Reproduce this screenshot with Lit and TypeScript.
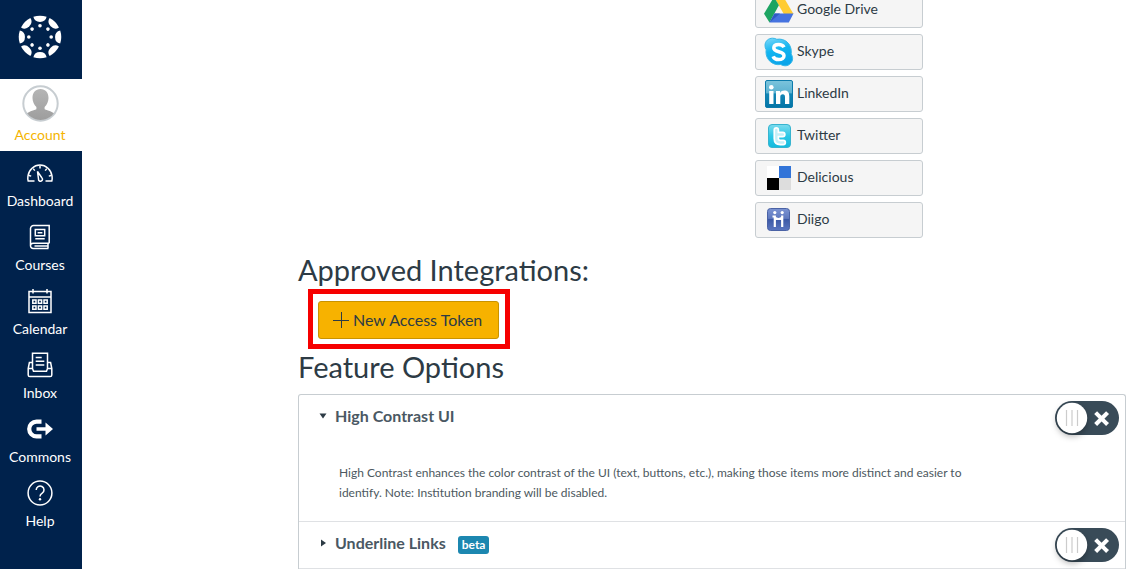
import { LitElement, html, css, svg, nothing } from "lit";
import type { SVGTemplateResult } from "lit";
import { customElement, property, state } from "lit/decorators.js";

const NAV_ICONS: Record<string, SVGTemplateResult> = {
  Dashboard: svg`
    <path d="M8.500 22H2.200C1.800 20.500 1.700 19 1.900 17.500 2.700 10.800 8 6 14 6s11.300 4.800 12.100 11.500c.2 1.500.1 3-.3 4.500H19.500"/>
    <path d="M14 6.500V9.500M7.200 9.600l1.600 2M20.800 9.600l-1.600 2M3 16.500l2.200.6M25 16.500l-2.200.6"/>
    <path d="M11.500 12.500l1 7.500a2 2 0 1 0 3.300-1.300z"/>`,
  Courses: svg`
    <path d="M23.200 20.200V2.600H7.500a3 3 0 0 0-3 3V22.800a2.600 2.600 0 0 0 2.600 2.600H22.500M23.200 20.200H7.100a2.600 2.600 0 0 0-2.600 2.600M22 20.500v4.700M8.500 22.900H22"/>
    <path d="M9.300 6.600h9.400v6.200H9.300zM9.300 15.800h9.400M11.600 9.700h4.800"/>`,
  Calendar: svg`
    <path d="M3 4.500h22v21H3zM3 10h22M7 2v4.500M21 2v4.500"/>
    <path d="M6.800 13.100h3.200v3.200H6.800zM12.400 13.100h3.200v3.200h-3.200zM18 13.100h3.200v3.200H18zM6.800 19.100h3.200v3.200H6.800zM12.400 19.100h3.200v3.200h-3.200zM18 19.100h3.200v3.200H18z"/>`,
  Inbox: svg`
    <path d="M6.500 17.500V2.300h15v15.200M6.500 11.500H3.400l-1.200 6v6.400a1.700 1.700 0 0 0 1.700 1.700h20.200a1.700 1.700 0 0 0 1.700-1.700v-6.400l-1.200-6h-3.100M2.200 17.500h4.300l1 2.700h13l1-2.700h4.300"/>
    <path d="M9.700 6.500h6M9.700 10.200h8.600M9.700 13.900h8.600"/>`,
  Commons: svg`
    <path d="M15.500 6.700H10.500a7.300 7.300 0 0 0 0 14.600H15.500" stroke-width="4.200"/>
    <path d="M10.500 12.200h9V7.500L27 14l-7.500 6.500v-4.700h-9z" fill="currentColor" stroke="none"/>`,
  Help: svg`
    <circle cx="14" cy="14" r="11.900"/>
    <path d="M10.200 11a3.900 3.900 0 1 1 6 3.200c-1.500 1-2.200 1.500-2.200 3.300" stroke-width="1.500"/>
    <circle cx="14" cy="20.300" r="1.200" fill="currentColor" stroke="none"/>`,
};

const SERVICES: { name: string; icon: SVGTemplateResult }[] = [
  {
    name: "Google Drive",
    icon: svg`
      <path d="M10 2h9.500l10 17H19.800z" fill="#fc3"/>
      <path d="M10 2l4.900 8.300L5.500 27.500 0 18.800z" fill="#1da462"/>
      <path d="M10.500 18.500h19L24.800 27.500H5.500z" fill="#4673e0"/>
      <path d="M10.500 18.500H16l-10.500 9z" fill="#2f5bc4"/>`,
  },
  {
    name: "Skype",
    icon: svg`
      <defs><linearGradient id="sk" x1="0" y1="0" x2="0.300" y2="1"><stop offset="0" stop-color="#7ed9fa"/><stop offset=".5" stop-color="#12b5f0"/><stop offset="1" stop-color="#0aa5ea"/></linearGradient></defs>
      <path d="M1 8.500C1 4 4.500 1.200 8.500 1.200c1.800 0 3 .4 4.300 1.100C20.500 1 27.500 6.500 27.300 15c0 .8-.1 1.300-.2 2 1 1.400 1.500 2.900 1.500 4.500 0 4-3.300 7.300-7.500 7.300-1.700 0-3.200-.5-4.400-1.300C8.500 28.800 2 22.600 2 15c0-.8.1-1.500.2-2.200C1.400 11.500 1 10 1 8.500z" fill="url(#sk)" stroke="#36b7e8"/>
      <path d="M20 10.300C19 8.300 17 7.500 14.700 7.500c-2.900 0-4.900 1.300-4.900 3.500 0 4.900 10.200 2.500 10.200 7.700 0 2.400-2.300 3.900-5.200 3.900-2.800 0-4.900-1.100-5.700-3.300" fill="none" stroke="#fff" stroke-width="3.500"/>`,
  },
  {
    name: "LinkedIn",
    icon: svg`
      <defs><linearGradient id="li" x1="0" y1="0" x2="0" y2="1"><stop offset="0" stop-color="#7cc4dc"/><stop offset=".45" stop-color="#5db2d1"/><stop offset=".5" stop-color="#1286b5"/><stop offset="1" stop-color="#0374a6"/></linearGradient></defs>
      <rect x="1.500" y="1.500" width="27" height="27" rx="1.500" fill="url(#li)" stroke="#0d7bab"/>
      <circle cx="7.300" cy="8.200" r="2.300" fill="#fff"/>
      <path d="M5.200 12h4.300v13H5.200zM12 12h4.100v1.900c.9-1.500 2.300-2.300 4.200-2.300 3.400 0 5 2 5 5.800V25H21v-7c0-1.800-.7-2.800-2.200-2.800-1.600 0-2.500 1-2.500 2.800v7H12z" fill="#fff"/>`,
  },
  {
    name: "Twitter",
    icon: svg`
      <defs><linearGradient id="tw" x1="0" y1="0" x2="0" y2="1"><stop offset="0" stop-color="#7ddcee"/><stop offset=".5" stop-color="#2ec8e6"/><stop offset="1" stop-color="#12bade"/></linearGradient></defs>
      <rect x="4.500" y="3.500" width="22" height="23" rx="3.500" fill="url(#tw)" stroke="#38b4cf"/>
      <path d="M12.300 9v8.500c0 2.800 1.500 4 4 4h3M12.300 13.500h6.500" fill="none" stroke="#fff" stroke-width="5.800" stroke-linecap="round" stroke-linejoin="round"/>
      <path d="M12.300 9v8.500c0 2.800 1.500 4 4 4h3M12.300 13.500h6.500" fill="none" stroke="#c4f0f8" stroke-width="2.400" stroke-linecap="round" stroke-linejoin="round"/>`,
  },
  {
    name: "Delicious",
    icon: svg`
      <path d="M3 3h12v12H3z" fill="#fff"/><path d="M15 3h12v12H15z" fill="#3274d8"/>
      <path d="M3 15h12v12H3z" fill="#000"/><path d="M15 15h12v12H15z" fill="#ddd"/>`,
  },
  {
    name: "Diigo",
    icon: svg`
      <defs><linearGradient id="dg" x1="0" y1="0" x2="0" y2="1"><stop offset="0" stop-color="#7b93d2"/><stop offset=".45" stop-color="#5f79bf"/><stop offset=".5" stop-color="#3c59a6"/><stop offset="1" stop-color="#5a76c0"/></linearGradient></defs>
      <rect x="3.500" y="3.500" width="22" height="22" rx="3" fill="url(#dg)" stroke="#4a62a5"/>
      <circle cx="10.800" cy="7.600" r="1.600" fill="#fff"/><circle cx="18.200" cy="7.600" r="1.600" fill="#fff"/>
      <path d="M8.500 11.500h2.300v10.500M10.800 12.500c1.500 2 5.900 2 7.400 0M18.200 10.500v11.500" fill="none" stroke="#fff" stroke-width="2.200"/>`,
  },
];

@customElement("nav-rail")
class NavRail extends LitElement {
  static styles = css`
    :host { display: block; background: #00224c; }
    .rail { display: flex; flex-direction: column; }
    .item {
      display: flex; flex-direction: column; align-items: center; gap: 4px;
      padding: 8px 0 4px; margin-right: 2px;
      color: #fff; text-decoration: none; font-size: 14px; line-height: 20px;
    }
    .glyph { width: 28px; height: 28px; fill: none; stroke: currentColor; stroke-width: 1.500; }
    .brand { display: block; padding: 15px 0 20px 18px; line-height: 0; }
    .mark { width: 44px; height: 44px; fill: #fff; }
    .account { margin: 0; padding: 6px 2px 6px 0; gap: 3px; background: #fff; color: #f5b400; }
    .avatar { width: 37px; height: 37px; }
  `;

  render() {
    const turns = [0, 45, 90, 135, 180, 225, 270, 315];
    return html`
      <nav class="rail" aria-label="Global navigation">
        <a class="brand" href="#" aria-label="Canvas home">
          <svg class="mark" viewBox="-22 -22 44 44" aria-hidden="true">
            ${turns.map((t) => svg`<g transform="rotate(${t})">
              <path d="M-6.600 -20.200A21.300 21.300 0 0 1 6.600 -20.200A6.700 6.200 0 0 1 -6.600 -20.200z"/>
              <circle cy="-11.200" r="1.800"/></g>`)}
          </svg>
        </a>
        <a class="item account" href="#" aria-current="page">
          <svg class="avatar" viewBox="0 0 37 37" aria-hidden="true">
            <defs>
              <clipPath id="face"><circle cx="18.500" cy="18.500" r="16.500"/></clipPath>
              <linearGradient id="shade" x1="0" y1="0" x2="0" y2="1"><stop offset="0" stop-color="#b5b5b5"/><stop offset="1" stop-color="#9c9c9c"/></linearGradient>
            </defs>
            <circle cx="18.500" cy="18.500" r="17.200" fill="#fff" stroke="#c7cdd1" stroke-width="2"/>
            <path clip-path="url(#face)" fill="url(#shade)" d="M18.500 4c5 0 8 3.700 8 9 0 3.500-1.600 7-3.900 9v2.200c3.200 1.600 8.600 2.300 10.400 5.300V37H4v-7.500c1.800-3 7.200-3.700 10.400-5.300V22c-2.300-2-3.900-5.500-3.900-9 0-5.300 3-9 8-9z"/>
          </svg>
          Account
        </a>
        ${Object.entries(NAV_ICONS).map(([name, icon]) => html`
          <a class="item" href="#">
            <svg class="glyph" viewBox="0 0 28 28" aria-hidden="true">${icon}</svg>${name}
          </a>`)}
      </nav>`;
  }
}

@customElement("feature-row")
class FeatureRow extends LitElement {
  @property() name = "";
  @property() tag = "";
  @property() details = "";
  @state() private open = true;
  @state() private on = false;

  static styles = css`
    :host { display: block; border-bottom: 1px solid #dfe1e4; }
    .head { display: flex; align-items: flex-start; justify-content: space-between; padding: 6px 6px 6px 18px; }
    .title { display: flex; align-items: center; gap: 12px; margin: 0; font-size: 16px; line-height: 30px; font-weight: 700; }
    .toggle { display: flex; align-items: center; gap: 6px; padding: 0; border: 0; background: none; color: #4a5863; font: inherit; }
    .caret { width: 12px; height: 12px; fill: #2d3b45; }
    .tag { padding: 0 4px; margin-top: 3px; border-radius: 3px; background: #1c87b0; color: #fff; font-size: 12px; line-height: 18px; }
    .details { max-width: 640px; margin: 0; padding: 22px 24px 18px 40px; color: #4c5860; font-size: 12px; line-height: 20px; }
    .switch { display: grid; }
    .switch > * { grid-area: 1 / 1; }
    .box { appearance: none; width: 64px; height: 34px; margin: 0; border-radius: 17px; background: #394b58; }
    .face { width: 64px; height: 34px; pointer-events: none; overflow: visible; }
    .knob { filter: drop-shadow(0 3px 3px rgba(0, 0, 0, 0.300)); }
  `;

  render() {
    const expanded = !!this.details && this.open;
    return html`
      <div class="head">
        <h3 class="title">
          <button class="toggle" type="button" aria-expanded=${expanded} @click=${() => (this.open = !this.open)}>
            <svg class="caret" viewBox="0 0 12 12" aria-hidden="true">
              <path d=${expanded ? "M2.500 3.500h7L6 8.500z" : "M4 2.500v7l5-3.500z"} />
            </svg>
            ${this.name}
          </button>
          ${this.tag ? html`<span class="tag">${this.tag}</span>` : nothing}
        </h3>
        <label class="switch">
          <input class="box" type="checkbox" role="switch" aria-label=${this.name}
            .checked=${this.on} @change=${() => (this.on = !this.on)} />
          <svg class="face" viewBox="0 0 64 34" aria-hidden="true">
            <g class="knob"><circle cx="17" cy="17" r="15.200" fill="#fff"/></g>
            <path d="M11.500 9v16M17 9v16M22.500 9v16" stroke="#ccc" stroke-width="1.200"/>
            <path d="M41.600 12.600l10 10M51.600 12.600l-10 10" stroke="#fff" stroke-width="4.600" stroke-linecap="square" stroke-linejoin="round" transform="translate(46.600 17.600) scale(.9) translate(-46.600 -17.600)"/>
          </svg>
        </label>
      </div>
      ${expanded ? html`<p class="details">${this.details}</p>` : nothing}`;
  }
}

@customElement("app-root")
class AppRoot extends LitElement {
  static styles = css`
    :host {
      display: grid; grid-template-columns: 82px 1fr; height: 100vh; overflow: hidden;
      background: #fff; color: #2d3b45; font-family: Lato, "Liberation Sans", sans-serif;
    }
    .main { min-width: 0; padding: 0 2px 0 216px; }
    .services {
      display: flex; flex-direction: column; gap: 6px;
      width: 168px; margin: -8px 0 0 457px; padding: 0; list-style: none;
    }
    .service {
      display: flex; align-items: center; gap: 3px; height: 34px; padding: 0 8px;
      border: 1px solid #c7cdd1; border-radius: 3px; background: #f5f5f5;
      color: #2d3b45; font-size: 14px; line-height: 20px; text-decoration: none;
    }
    .label { padding-bottom: 2px; }
    .logo { width: 30px; height: 30px; }
    .heading { margin: 0; font-size: 29px; line-height: 36px; font-weight: 400; }
    .first { padding: 14px 0 1px; }
    .frame { width: fit-content; margin-left: 10px; padding: 7px 6px 5px 5px; border: 5px solid #f60000; }
    .create {
      display: flex; align-items: center; gap: 4px; height: 38px; padding: 0 16px 0 14px;
      border: 1px solid #c99300; border-radius: 3px; background: #f7b200;
      color: #2d3b45; font: 400 16px/24px Lato, "Liberation Sans", sans-serif;
    }
    .plus { width: 16px; height: 16px; stroke: currentColor; }
    .features { margin-top: 9px; border: 1px solid #c7cdd1; border-bottom: 0; border-radius: 3px 3px 0 0; }
  `;

  render() {
    return html`
      <nav-rail></nav-rail>
      <main class="main">
        <ul class="services">
          ${SERVICES.map((s) => html`
            <li><a class="service" href="#">
              <svg class="logo" viewBox="0 0 30 30" aria-hidden="true">${s.icon}</svg>
              <span class="label">${s.name}</span>
            </a></li>`)}
        </ul>
        <h2 class="heading first">Approved Integrations:</h2>
        <div class="frame">
          <button class="create" type="button">
            <svg class="plus" viewBox="0 0 16 16" aria-hidden="true"><path d="M8.500 0v16M0 8.500h16"/></svg>
            New Access Token
          </button>
        </div>
        <h2 class="heading">Feature Options</h2>
        <section class="features" aria-label="Feature options">
          <feature-row name="High Contrast UI"
            details="High Contrast enhances the color contrast of the UI (text, buttons, etc.), making those items more distinct and easier to identify. Note: Institution branding will be disabled."></feature-row>
          <feature-row name="Underline Links" tag="beta"></feature-row>
        </section>
      </main>`;
  }
}
